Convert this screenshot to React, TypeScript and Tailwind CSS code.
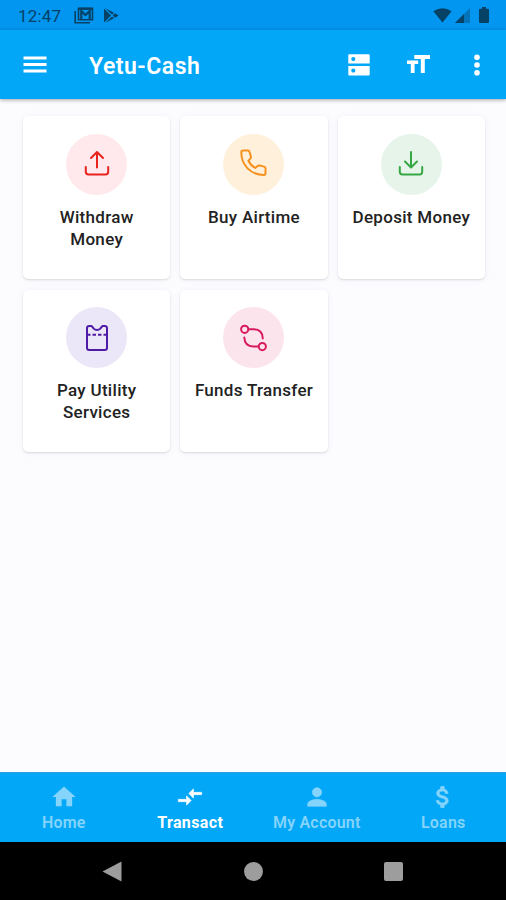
import React from 'react';

const CARDS = [
  {
    title: 'Withdraw Money',
    circle: 'bg-[#ffe9ec]',
    color: 'text-[#e8221c]',
    icon: <path d="M3.800 18v4.800q0 2.700 2.700 2.700h17q2.700 0 2.700-2.700V18M15 18.500V3.500M9 9l6-6 6 6" />,
  },
  {
    title: 'Buy Airtime',
    circle: 'bg-[#fff0dc]',
    color: 'text-[#f7911e]',
    icon: <path d="M4 1.500h5q1.200 0 1.500 1.200l1.400 5q.3 1.100-.5 1.900l-2 2.100q2.300 4.800 6.900 7.200l2.400-2q.8-.6 1.800-.4l4.700 1.100q1.300.3 1.300 1.600v5q0 1.700-1.700 1.700C11.500 25.900 2.300 16 2.300 3.300q0-1.800 1.700-1.800z" />,
  },
  {
    title: 'Deposit Money',
    circle: 'bg-[#e7f4ea]',
    color: 'text-[#35a845]',
    icon: <path d="M3.800 18v4.800q0 2.700 2.700 2.700h17q2.700 0 2.700-2.700V18M15 3v15M9 12.500l6 6 6-6" />,
  },
  {
    title: 'Pay Utility Services',
    circle: 'bg-[#ece7f8]',
    color: 'text-[#4f1ba6]',
    icon: (
      <>
        <path d="M5 5.300Q5 3 7.300 3h1.500q1 0 1.600.9l1.300 1.700q1.400 1.400 3.300 1.400t3.300-1.400l1.300-1.700q.6-.9 1.600-.9h1.500Q25 3 25 5.300v19.400q0 2.300-2.300 2.300H7.300Q5 27 5 24.700z" />
        <path d="M5 11.700h20" strokeDasharray="3.500 2" strokeLinecap="butt" />
      </>
    ),
  },
  {
    title: 'Funds Transfer',
    circle: 'bg-[#fce4ec]',
    color: 'text-[#d81b5f]',
    icon: (
      <>
        <circle cx="5.700" cy="6.300" r="3.600" />
        <circle cx="23.300" cy="23.600" r="3.600" />
        <path d="M9.500 6.300H15q8.600.3 8.800 9.200M5.300 14.500q.4 8.800 9 9.100h5.200" />
      </>
    ),
  },
];

const TABS = [
  { label: 'Home', icon: <path d="M10 20v-6h4v6h5v-8h3L12 3 2 12h3v8z" /> },
  { label: 'Transact', active: true, icon: <path d="M9.010 14H2v2h7.010v3L13 15l-3.990-4v3zm5.980-1v-3H22V8h-7.010V5L11 9l3.990 4z" stroke="currentColor" strokeWidth=".5" /> },
  { label: 'My Account', icon: <path d="M12 12c2.210 0 4-1.790 4-4s-1.790-4-4-4-4 1.790-4 4 1.790 4 4 4zm0 2c-2.670 0-8 1.340-8 4v2h16v-2c0-2.660-5.330-4-8-4z" stroke="currentColor" strokeWidth=".5" /> },
  { label: 'Loans', icon: <path d="M11.800 10.900c-2.270-.59-3-1.200-3-2.150 0-1.090 1.010-1.850 2.700-1.850 1.780 0 2.440.85 2.500 2.100h2.210c-.07-1.720-1.120-3.300-3.210-3.810V3h-3v2.160c-1.940.42-3.500 1.680-3.500 3.610 0 2.310 1.910 3.460 4.700 4.130 2.500.6 3 1.480 3 2.410 0 .69-.49 1.790-2.700 1.790-2.060 0-2.870-.92-2.980-2.100h-2.200c.12 2.190 1.760 3.420 3.680 3.830V21h3v-2.150c1.950-.37 3.500-1.500 3.500-3.550 0-2.840-2.430-3.810-4.700-4.400z" stroke="currentColor" strokeWidth=".6" /> },
];

const App: React.FC = () => {
  return (
    <div className="flex h-[900px] w-[506px] flex-col overflow-hidden bg-[#fcfbfe] font-['Roboto',sans-serif]">
      <div className="flex h-[30px] shrink-0 items-center bg-[#0296f0] pl-[18px] pr-[17px] text-[#064166]">
        <span className="mt-[3px] text-[17px] tracking-[0.2px]">12:47</span>
        <svg className="ml-[13px] h-[17px] w-[20px]" viewBox="0 0 20 17" fill="none" stroke="currentColor" strokeWidth="1.600">
          <path d="M1.200 4v11.800H16" />
          <path d="M4.500 1.200h14v11.500h-14z" />
          <path d="M7.300 12V4l4.200 4 4.200-4v8M5 1.800h13" strokeWidth="2.200" />
        </svg>
        <svg className="ml-[10px] h-[15px] w-[15px]" viewBox="0 0 15 15" fill="currentColor">
          <path d="M0 .4v14.200L7 7.500z" />
          <path d="M1.200.2L8 6.600l2-1.900zM1.200 14.800L8 8.400l2 1.900zM11 5.300L8.700 7.500 11 9.700l3.700-2.200z" />
        </svg>
        <svg className="ml-auto h-[15px] w-[19px]" viewBox="0 0 19 15" fill="currentColor">
          <path d="M9.500 14.500L.3 3.200Q9.500-2.800 18.700 3.200z" />
        </svg>
        <svg className="ml-[3px] h-[15px] w-[15px]" viewBox="0 0 15 15" fill="currentColor">
          <path d="M0 15L15 0v15z" opacity=".4" />
          <path d="M0 15l9-9v9z" />
        </svg>
        <svg className="ml-[9px] h-[16px] w-[10px]" viewBox="0 0 10 16" fill="currentColor">
          <path d="M3 0h4v1.800h2q1 0 1 1V15q0 1-1 1H1q-1 0-1-1V2.800q0-1 1-1h2z" />
        </svg>
      </div>

      <header className="z-10 flex h-[69px] shrink-0 items-center bg-[#03a7f7] pb-[1px] pl-[23px] pr-[25px] text-white shadow-[0_1px_4px_rgba(0,0,0,0.35)]">
        <svg className="mt-[1px] h-[17px] w-[24px]" viewBox="0 0 24 17" fill="currentColor">
          <path d="M.5.500h23v3H.5zM.5 7h23v3H.5zM.5 13.500h23v3H.5z" />
        </svg>
        <h1 className="ml-[42px] mt-[4px] whitespace-nowrap text-[23px] font-semibold leading-none tracking-[0.500px]">Yetu-Cash</h1>
        <svg className="ml-auto mt-[1px] h-[22px] w-[22px]" viewBox="0 0 22 22" fill="currentColor" fillRule="evenodd">
          <path d="M1.300.300h19.400q1 0 1 1v8.200H.3V1.300q0-1 1-1zM5.300 3a2.100 2.100 0 1 0 0 4.200 2.100 2.100 0 0 0 0-4.200zM.3 12h21.400v8.500q0 1-1 1H1.300q-1 0-1-1zm5 2.500a2.100 2.100 0 1 0 0 4.200 2.100 2.100 0 0 0 0-4.200z" />
        </svg>
        <svg className="mb-[1px] ml-[37px] h-[18px] w-[23px]" viewBox="0 0 23 18" fill="currentColor">
          <path d="M7.300 0H23v4h-5.200v14h-4V4H7.300zM0 5.600h11.200v3.500H7.600V18H3.800V9.100H0z" />
        </svg>
        <svg className="mt-[1px] ml-[43px] h-[22px] w-[8px]" viewBox="0 0 8 22" fill="currentColor">
          <circle cx="4" cy="3.300" r="2.800" />
          <circle cx="4" cy="11" r="2.800" />
          <circle cx="4" cy="18.700" r="2.800" />
        </svg>
      </header>

      <main className="flex-1 pl-[23px] pr-[21px] pt-[17px]">
        <div className="grid grid-cols-3 gap-x-[10px] gap-y-[11px]">
          {CARDS.map(card => (
            <div
              key={card.title}
              className="flex h-[162.500px] flex-col items-center rounded-[5px] bg-white pt-[17.500px] shadow-[0_1px_2px_rgba(0,0,0,0.12),0_1px_9px_rgba(40,40,90,0.04)]"
            >
              <div className={`flex h-[61px] w-[61px] items-center justify-center rounded-full ${card.circle}`}>
                <svg
                  className={`h-[30px] w-[30px] ${card.color}`}
                  viewBox="0 0 30 30"
                  fill="none"
                  stroke="currentColor"
                  strokeWidth="2"
                  strokeLinecap="round"
                  strokeLinejoin="round"
                >
                  {card.icon}
                </svg>
              </div>
              <h2 className="mt-[11px] max-w-[126px] text-center text-[17px] font-medium leading-[22px] tracking-[0.300px] text-[#222]">
                {card.title}
              </h2>
            </div>
          ))}
        </div>
      </main>

      <nav className="grid h-[70px] shrink-0 grid-cols-4 border-t border-[#2b9edb] bg-[#03a7f7]">
        {TABS.map(tab => (
          <div key={tab.label} className={`flex flex-col items-center pl-[1px] pt-[10px] ${tab.active ? 'text-white' : 'text-[#84d4fb]'}`}>
            <svg className="h-[28px] w-[28px]" viewBox="0 0 24 24" fill="currentColor">
              {tab.icon}
            </svg>
            <span className={`mt-[2px] whitespace-nowrap text-[16px] leading-[20px] ${tab.active ? 'font-bold tracking-[0.400px]' : 'font-semibold tracking-[0.200px]'}`}>
              {tab.label}
            </span>
          </div>
        ))}
      </nav>

      <div className="flex h-[58px] shrink-0 items-center justify-between bg-black pl-[102px] pr-[103px] text-[#9d9d9d]">
        <svg className="h-[21px] w-[20px]" viewBox="0 0 20 21" fill="currentColor">
          <path d="M19.500.500v20L.5 10.500z" />
        </svg>
        <div className="h-[19px] w-[19px] rounded-full bg-[#9d9d9d]" />
        <div className="h-[19px] w-[19px] rounded-[2px] bg-[#9d9d9d]" />
      </div>
    </div>
  );
};

export default App;
